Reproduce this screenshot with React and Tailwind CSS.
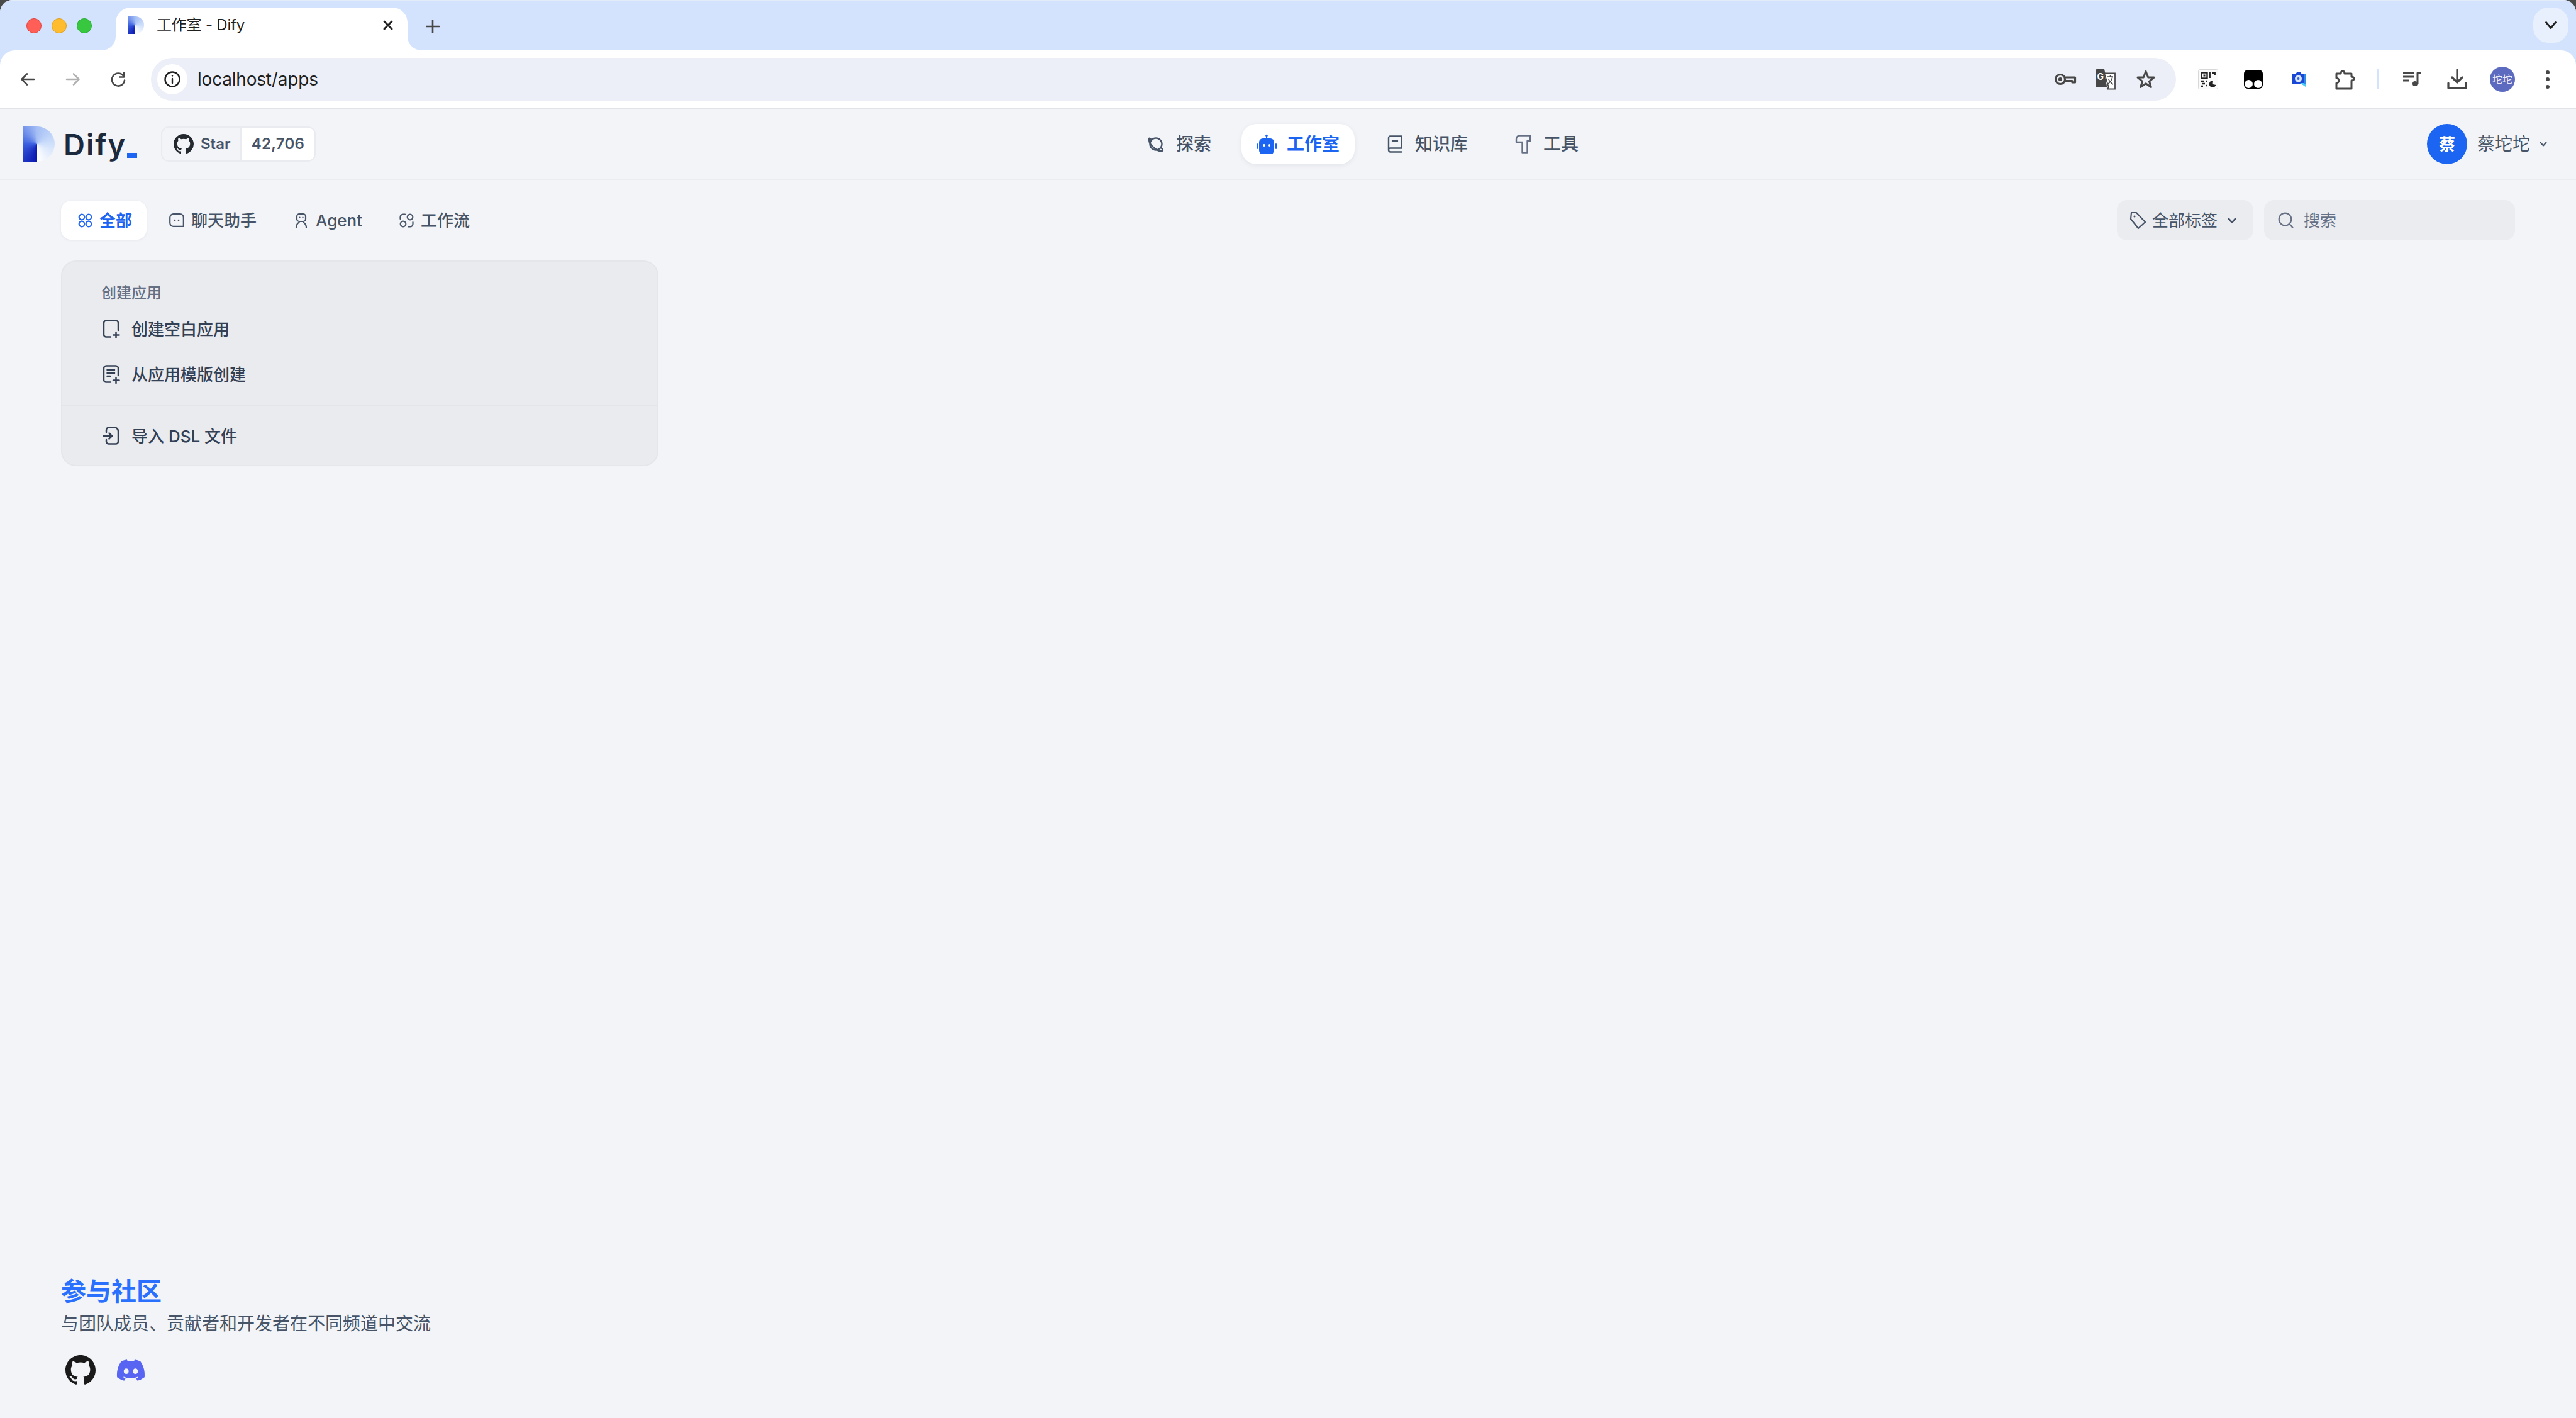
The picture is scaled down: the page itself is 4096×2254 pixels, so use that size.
import React from "react";
import { BsGithub } from "react-icons/bs";
import { FaDiscord } from "react-icons/fa";

const S = ({ w, h, children, className = "", sw = 2, c = "currentColor", fill = "none" }) => (
  <svg width={w} height={h} viewBox={`0 0 ${w} ${h}`} fill={fill} stroke={c} strokeWidth={sw} strokeLinecap="round" strokeLinejoin="round" className={"shrink-0 " + className}>
    {children}
  </svg>
);

const DifyMark = ({ small }) => (
  <div className={(small ? "w-[25px] h-[28px] rounded-r-[14px] " : "w-[51px] h-[56px] rounded-r-[28px] ") + "shrink-0 bg-[conic-gradient(from_0deg_at_45%_50%,#a5bff5_0deg,#cfe0fb_90deg,#ffffff_180deg,#0a17b0_180.5deg,#3a5fe0_270deg,#a5bff5_360deg)]"} />
);

const Chevron = ({ w = 14, h = 8, sw = 2.2, className = "" }) => (
  <S w={w} h={h} sw={sw} className={className}><path d={`M1.5 1.5 L${w / 2} ${h - 1.5} L${w - 1.5} 1.5`} /></S>
);

const Chrome = { c: "#474747" };

function TabStrip() {
  return (
    <div className="h-[80px] flex items-start pt-[10px] border-t-2 border-[#e3ebf9]">
      <div className="flex items-center gap-[16px] pl-[42px] h-[58px] shrink-0">
        <div className="w-[24px] h-[24px] rounded-full bg-[#ff5f57] border border-[#e0443e]" />
        <div className="w-[24px] h-[24px] rounded-full bg-[#febc2e] border border-[#dea123]" />
        <div className="w-[24px] h-[24px] rounded-full bg-[#38c840] border border-[#2aac33]" />
      </div>
      <div className="relative ml-[38px] w-[464px] h-[68px] bg-white rounded-t-[24px] flex items-start pt-[14px] pl-[20px] shrink-0">
        <DifyMark small />
        <span className="ml-[20px] text-[24px] leading-[28px] tracking-[-0.2px] text-[#1f1f1f]">工作室 - Dify</span>
        <S w={18} h={18} sw={3} c="#1f1f1f" className="ml-auto mr-[22px] mt-[5px]"><path d="M3 3 L15 15 M15 3 L3 15" /></S>
        <svg width="22" height="22" viewBox="0 0 22 22" className="absolute left-[-22px] bottom-0"><path d="M22 0 V22 H0 A22 22 0 0 0 22 0 Z" fill="#fff" /></svg>
        <svg width="22" height="22" viewBox="0 0 22 22" className="absolute right-[-22px] bottom-0"><path d="M0 0 V22 H22 A22 22 0 0 1 0 0 Z" fill="#fff" /></svg>
      </div>
      <S w={22} h={22} sw={2.6} c="#474747" className="ml-[29px] mt-[19px]"><path d="M11 1 V21 M1 11 H21" /></S>
      <div className="ml-auto mr-[12px] w-[56px] h-[56px] rounded-[24px] bg-[#e8f0fd] flex items-center justify-center mt-[0px]">
        <Chevron w={18} h={12} sw={2.8} className="text-[#1f1f1f]" />
      </div>
    </div>
  );
}

function Toolbar() {
  const box = "w-[72px] h-[48px] flex items-center justify-center shrink-0";
  const inner = "w-[64px] h-[48px] flex items-center justify-center shrink-0";
  return (
    <div className="h-[94px] bg-white rounded-t-[24px] flex items-center pl-[8px] border-b-2 border-[#e1e3e6]">
      <div className={box}><S w={24} h={24} sw={2.6} c={Chrome.c}><path d="M22 12 H2.5 M11 3.5 L2.5 12 L11 20.5" /></S></div>
      <div className={box}><S w={24} h={24} sw={2.6} c="#b0b0b0"><path d="M2 12 H21.5 M13 3.5 L21.5 12 L13 20.5" /></S></div>
      <div className={box}><S w={24} h={24} sw={2.6} c={Chrome.c}><path d="M20 6.5 A10 10 0 1 0 22 13.5" /><path d="M21 1.5 V8.5 H14" /></S></div>
      <div className="ml-[16px] w-[3220px] h-[68px] rounded-full bg-[#ecEff7] flex items-center pl-[10px] shrink-0">
        <div className="w-[48px] h-[48px] rounded-full bg-white flex items-center justify-center">
          <S w={28} h={28} sw={2.4} c="#1f1f1f"><circle cx="14" cy="14" r="11.5" /><path d="M14 13 V20" /><path d="M14 8.4 V8.6" /></S>
        </div>
        <span className="ml-[16px] text-[28px] leading-[36px] tracking-[-0.2px] text-[#1f1f1f]">localhost/apps</span>
        <div className="ml-auto flex items-center pr-[16px]">
          <div className={inner}>
            <S w={36} h={20} sw={3.2} c={Chrome.c}><circle cx="10" cy="10" r="7.5" /><circle cx="10" cy="10" r="1.5" fill="#474747" /><path d="M17.5 7 H33.5 V15 H29 V12.5 H17.5" /></S>
          </div>
          <div className={inner}>
            <svg width="32" height="33" viewBox="0 0 32 33" className="shrink-0">
              <path d="M2 0 H14 L21 29 H2 A2 2 0 0 1 0 27 V2 A2 2 0 0 1 2 0 Z" fill="#474747" />
              <path d="M14 6.5 H31 V31.5 H19" fill="#fff" stroke="#474747" strokeWidth="1.8" />
              <path d="M14 6.5 L21 29 L18 32" fill="none" stroke="#474747" strokeWidth="1.8" />
              <text x="2.5" y="17" fontSize="14" fontWeight="700" fill="#fff" fontFamily="Inter">G</text>
              <path d="M19 12 H28 M23.5 10 V12 M27 12 C26 18 22 22 20 23 M20.5 15 C22 19 25 22 28 24" fill="none" stroke="#474747" strokeWidth="1.6" />
            </svg>
          </div>
          <div className={inner}>
            <S w={30} h={30} sw={3} c={Chrome.c}><path d="M15 2.5 L18.7 12 L28 12 L20.5 18.3 L23.3 27.5 L15 21.8 L6.7 27.5 L9.5 18.3 L2 12 L11.3 12 Z" /></S>
          </div>
        </div>
      </div>
      <div className={box + " ml-[15px]"}>
        <svg width="32" height="32" viewBox="0 0 32 32" className="shrink-0">
          <rect x="0.5" y="0.5" width="31" height="31" rx="2" fill="#fafafa" stroke="#d8d8d8" />
          <rect x="5.5" y="5.5" width="9" height="9" fill="none" stroke="#222" strokeWidth="2.4" />
          <rect x="8.5" y="8.5" width="3" height="3" fill="#222" />
          <path d="M18.5 5 V14 M22 5.5 H26.5 V9.5" fill="none" stroke="#222" strokeWidth="2.8" />
          <path d="M5 19 H9 M7 23 H11 M5 27 H8 M13 19 H15 M13 26 H15" fill="none" stroke="#222" strokeWidth="2.6" />
          <path d="M24 18 A5.5 5.5 0 1 0 28.5 25 L23.5 24 Z" fill="#222" />
        </svg>
      </div>
      <div className={box}>
        <div className="w-[30px] h-[30px] rounded-[6px] bg-black relative flex items-end justify-between px-[1px] pb-[1px]">
          <div className="w-[13px] h-[13px] rounded-full bg-white" />
          <div className="w-[13px] h-[13px] rounded-full bg-white" />
        </div>
      </div>
      <div className={box}>
        <svg width="24" height="24" viewBox="0 0 24 24" className="shrink-0">
          <path d="M2 4 H7 L9 1 H15 L17 4 H21 V19 H2 Z" fill="#1a47d6" />
          <path d="M14 18 H23 V24 Z" fill="#4cc9f5" />
          <path d="M21 4 H23 V19 H21 Z" fill="#2f8be8" />
          <circle cx="11.5" cy="11" r="5.5" fill="#d9e6fb" />
          <circle cx="11.5" cy="11" r="2" fill="#2f62dd" />
        </svg>
      </div>
      <div className={box}>
        <S w={34} h={34} sw={3} c={Chrome.c} className="ml-[2px]"><path d="M4 8 H11 C11 2.5 17 2.5 17 8 H28 V13 C33 13 33 19 28 19 V32 H4 V23 C9 23 9 15 4 15 Z" strokeLinejoin="round" /></S>
      </div>
      <div className="ml-[16px] w-[4px] h-[32px] rounded-full bg-[#d3e3fd] shrink-0" />
      <div className={box + " ml-[16px]"}>
        <S w={30} h={24} sw={3} c={Chrome.c}><path d="M1 2 H18 M1 8 H18 M1 14 H11" strokeLinecap="butt" /><path d="M24 19 V2 H30" strokeLinecap="butt" /><circle cx="20" cy="19" r="4" fill="#474747" stroke="none" /></S>
      </div>
      <div className={box}>
        <S w={32} h={32} sw={3.2} c={Chrome.c}><path d="M16 1 V21 M8 13 L16 21 L24 13" /><path d="M2 22 V30 H30 V22" /></S>
      </div>
      <div className={box}>
        <div className="w-[40px] h-[40px] rounded-full bg-[#5c6bc0] flex items-center justify-center text-[16px] leading-none text-[#e8eaf6]">坨坨</div>
      </div>
      <div className={box}>
        <div className="flex flex-col gap-[5.5px]">
          <div className="w-[6px] h-[6px] rounded-full bg-[#474747]" />
          <div className="w-[6px] h-[6px] rounded-full bg-[#474747]" />
          <div className="w-[6px] h-[6px] rounded-full bg-[#474747]" />
        </div>
      </div>
    </div>
  );
}

const NavItem = ({ active, icon, label }) => (
  <div className={"h-[64px] px-[24px] rounded-[24px] flex items-center text-[28px] leading-[40px] font-medium " + (active ? "bg-white text-[#1c64f2] font-semibold shadow-[0_2px_8px_rgba(16,24,40,0.07)]" : "text-[#475467]")}>
    <div className="w-[32px] h-[32px] flex items-center justify-center mr-[16px]">{icon}</div>
    {label}
  </div>
);

function Header() {
  return (
    <div className="h-[112px] border-b-2 border-[#eaecf0] flex items-center pl-[36px] pr-[46px] shrink-0">
      <div className="w-[220px] h-[56px] flex shrink-0">
        <DifyMark />
        <span className="ml-[14px] text-[47px] leading-[58px] font-semibold text-[#1c2a3e] tracking-[2px]">Dify</span>
        <div className="w-[16px] h-[8px] ml-[1px] mt-[42px] bg-[#1c64f2]" />
      </div>
      <div className="w-[246px] h-[56px] rounded-[12px] border-2 border-[#e9ebf0] flex items-stretch overflow-hidden shrink-0 text-[24px] font-semibold text-[#475467]">
        <div className="w-[126px] flex items-center pl-[18px] border-r-2 border-[#e9ebf0]">
          <BsGithub className="w-[32px] h-[32px] text-[#24292f] shrink-0" />
          <span className="ml-[11px]">Star</span>
        </div>
        <div className="flex-1 bg-white flex items-center justify-center tracking-[0.3px]">42,706</div>
      </div>
      <div className="ml-[1296px] flex items-center gap-[24px]">
        <NavItem label="探索" icon={
          <S w={26} h={26} sw={2.4} c="#475467"><circle cx="13" cy="13" r="9.5" /><path d="M6 6 C3 3 2 3 2 6 C2 10 5 15 10 19 C15 23 20 25 23 24 C25 23 24 21 21 19" /></S>
        } />
        <NavItem active label="工作室" icon={
          <svg width="32" height="32" viewBox="0 0 32 32" className="shrink-0">
            <circle cx="16" cy="2.5" r="1.8" fill="#1c64f2" />
            <rect x="15" y="3" width="2" height="5" fill="#1c64f2" />
            <rect x="4" y="7" width="24" height="25" rx="6" fill="#1c64f2" />
            <rect x="0" y="15" width="2" height="9" rx="1" fill="#1c64f2" />
            <rect x="30" y="15" width="2" height="9" rx="1" fill="#1c64f2" />
            <circle cx="12" cy="18" r="2" fill="#fff" />
            <circle cx="20" cy="18" r="2" fill="#fff" />
          </svg>
        } />
        <NavItem label="知识库" icon={
          <S w={24} h={28} sw={2.4} c="#475467"><path d="M2 23 V4 A2.5 2.5 0 0 1 4.5 1.5 H22.5 V20.5 H4.5 A2.5 2.5 0 0 0 2 23 A3 3 0 0 0 4.5 26.5 H22.5" /><path d="M8 9 H16" /></S>
        } />
        <NavItem label="工具" icon={
          <S w={26} h={30} sw={2.4} c="#667085"><path d="M7 1.5 H24 V10 H19.5 V28.5 H11.5 V12 H2 V7.5 C2 4 4 1.5 7 1.5 Z" /></S>
        } />
      </div>
      <div className="ml-auto flex items-center">
        <div className="w-[64px] h-[64px] rounded-full bg-[#1c64f2] flex items-center justify-center text-white text-[26px] font-semibold">蔡</div>
        <span className="ml-[16px] text-[28px] leading-[40px] text-[#475467]">蔡坨坨</span>
        <Chevron w={12} h={8} sw={2} className="ml-[15px] text-[#475467]" />
      </div>
    </div>
  );
}

const FilterTab = ({ active, icon, label, w, pl }) => (
  <div className={"h-[62px] flex items-center text-[26px] leading-[36px] font-medium shrink-0 " + (active ? "bg-white rounded-[16px] text-[#1c64f2] font-semibold shadow-[0_1px_4px_rgba(16,24,40,0.06)]" : "text-[#475467]")} style={{ width: w, paddingLeft: pl }}>
    {icon}
    <span className="pt-[2px]">{label}</span>
  </div>
);

function Filters() {
  return (
    <div className="flex items-center h-[64px]">
      <FilterTab active w={136} pl={27} label="全部" icon={
        <S w={23} h={23} sw={2.2} c="#1c64f2" className="mr-[11px]"><circle cx="6" cy="6" r="4.3" /><circle cx="17" cy="6" r="4.3" /><circle cx="6" cy="17" r="4.3" /><circle cx="17" cy="17" r="4.3" /></S>
      } />
      <FilterTab w={200} pl={36} label="聊天助手" icon={
        <S w={24} h={22} sw={2.2} c="#475467" className="mr-[11px]"><path d="M7 1.2 H17 A5.5 5.5 0 0 1 22.8 7 V20.8 H7 A5.5 5.5 0 0 1 1.2 15 V7 A5.5 5.5 0 0 1 7 1.2 Z" /><path d="M9 11 V11.2 M15 11 V11.2" strokeWidth="2.6" /></S>
      } />
      <FilterTab w={166} pl={36} label="Agent" icon={
        <S w={20} h={25} sw={2.2} c="#475467" className="mr-[13px]"><rect x="3" y="2" width="14" height="12" rx="4" /><path d="M7.5 7.5 V8 M12.5 7.5 V8" /><path d="M2 24 C2 19 4 17 6.5 15.5 M18 24 C18 19 16 17 13.5 15.5" /></S>
      } />
      <FilterTab w={200} pl={36} label="工作流" icon={
        <S w={23} h={23} sw={2.2} c="#475467" className="mr-[11px]"><circle cx="17" cy="6" r="4.3" /><circle cx="6" cy="17" r="4.3" /><path d="M1.5 9 V6 A4.5 4.5 0 0 1 6 1.5 H9" /><path d="M21.5 14 V17 A4.5 4.5 0 0 1 17 21.5 H14" /></S>
      } />
      <div className="ml-auto flex items-center gap-[17px]">
        <div className="w-[217px] h-[64px] rounded-[16px] bg-[#ebecf0] flex items-center pl-[20px] text-[26px] leading-[36px] text-[#475467]">
          <S w={26} h={28} sw={2.2} c="#475467" className="mr-[10px]"><path d="M3 2 H11 L25 17 L14 27 L2 12 Z" /><path d="M8 8 V8.2" strokeWidth="2.8" /></S>
          <span className="pt-[2px]">全部标签</span>
          <Chevron w={14} h={9} sw={2.6} className="ml-[16px]" />
        </div>
        <div className="w-[399px] h-[64px] rounded-[16px] bg-[#ebecf0] flex items-center pl-[22px] text-[26px] leading-[36px] text-[#667085]">
          <S w={25} h={26} sw={2.2} c="#667085" className="mr-[16px]"><circle cx="11.5" cy="11.5" r="9.8" /><path d="M18.5 19 L23.5 25" /></S>
          <span className="pt-[2px]">搜索</span>
        </div>
      </div>
    </div>
  );
}

const CardItem = ({ icon, label }) => (
  <div className="h-[72px] flex items-center text-[26px] leading-[36px] font-medium text-[#344054]">
    <div className="w-[32px] flex items-center justify-center mr-[16px]">{icon}</div>
    <span className="pt-[2px]">{label}</span>
  </div>
);

function CreateCard() {
  const plus = <path d="M21.5 20 V29 M17 24.5 H26.5" />;
  return (
    <div className="mt-[32px] w-[950px] h-[327px] rounded-[24px] border-2 border-[#e4e6ea] bg-[#eaebef] pt-[33px] shrink-0">
      <div className="pl-[62px] pt-[1px] h-[32px] text-[24px] leading-[32px] font-medium text-[#667085]">创建应用</div>
      <div className="pl-[62px] mt-[6px]">
        <CardItem label="创建空白应用" icon={
          <S w={28} h={30} sw={2.5} c="#344054"><path d="M13 27.5 H6 A4 4 0 0 1 2 23.5 V5.5 A4 4 0 0 1 6 1.5 H21 A4 4 0 0 1 25 5.5 V17" />{plus}</S>
        } />
        <CardItem label="从应用模版创建" icon={
          <S w={28} h={30} sw={2.5} c="#344054"><path d="M13 27.5 H6 A4 4 0 0 1 2 23.5 V5.5 A4 4 0 0 1 6 1.5 H21 A4 4 0 0 1 25 5.5 V17" /><path d="M7.5 8 H19 M7.5 13 H19 M7.5 18 H12" />{plus}</S>
        } />
      </div>
      <div className="mt-[12px] h-[2px] bg-[#e3e5e9]" />
      <div className="pl-[62px] mt-[12px]">
        <CardItem label="导入 DSL 文件" icon={
          <S w={28} h={30} sw={2.5} c="#344054"><path d="M6 9 V5.5 A4 4 0 0 1 10 1.5 H19 A6 6 0 0 1 25 7.5 V23.5 A4 4 0 0 1 21 27.5 H10 A4 4 0 0 1 6 23.5 V21" /><path d="M1.5 15 H15 M10.5 10.5 L15 15 L10.5 19.5" /></S>
        } />
      </div>
    </div>
  );
}

function Footer() {
  return (
    <div className="mt-auto pb-[52px]">
      <div className="text-[40px] leading-[58px] font-semibold text-[#2970ff]">参与社区</div>
      <div className="text-[28px] leading-[44px] text-[#475467]">与团队成员、贡献者和开发者在不同频道中交流</div>
      <div className="mt-[28px] flex items-center">
        <BsGithub className="ml-[7px] w-[48px] h-[48px] text-[#1a1a1a]" />
        <FaDiscord className="ml-[32px] w-[48px] h-[48px] text-[#5865f2]" />
      </div>
    </div>
  );
}

export default function App() {
  return (
    <div className="w-[4096px] h-[2254px] bg-[#4a4a4a] overflow-hidden [font-family:Inter,'Noto_Sans_CJK_SC',sans-serif]">
      <div className="w-full h-full rounded-t-[20px] overflow-hidden bg-[#f2f4f8] flex flex-col">
        <div className="bg-[#d3e3fd] shrink-0">
          <TabStrip />
          <Toolbar />
        </div>
        <Header />
        <div className="flex-1 flex flex-col px-[97px] pt-[32px]">
          <Filters />
          <CreateCard />
          <Footer />
        </div>
      </div>
    </div>
  );
}
